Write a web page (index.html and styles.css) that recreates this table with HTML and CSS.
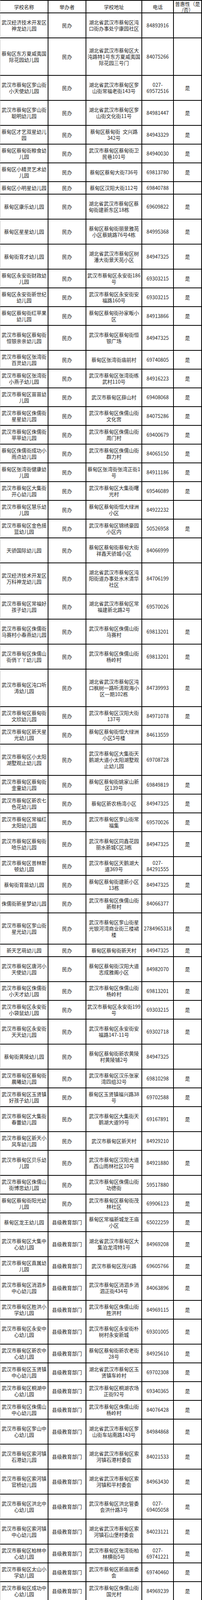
FILE: index.html
```html
<!DOCTYPE html>
<html lang="zh-CN">
<head>
<meta charset="utf-8">
<title>蔡甸区幼儿园名录</title>
<link rel="stylesheet" href="styles.css">
</head>
<body>
<div class="list">
<div class="row head"><div class="cell">学校名称</div><div class="cell">举办者</div><div class="cell">学校地址</div><div class="cell">电话</div><div class="cell">普惠性（是<br>/否）</div></div>
<div class="row h4"><div class="cell">武汉经济技术开发区<br>神龙幼儿园</div><div class="cell">民办</div><div class="cell">湖北省武汉市蔡甸区沌<br>口街办事处宁康园社区</div><div class="cell">84893916</div><div class="cell"></div></div>
<div class="row h6"><div class="cell">蔡甸区东方夏威夷国<br>际花园幼儿园</div><div class="cell">民办</div><div class="cell">湖北省武汉市蔡甸区大<br>沌路特1号东方夏威夷国<br>际花园三号门</div><div class="cell">84075266</div><div class="cell"></div></div>
<div class="row h4"><div class="cell">武汉市蔡甸区奓山街<br>小天使幼儿园</div><div class="cell">民办</div><div class="cell">湖北省武汉市蔡甸区奓<br>山街常福老街143号</div><div class="cell">027-<br>69572516</div><div class="cell">是</div></div>
<div class="row h4"><div class="cell">武汉市蔡甸区奓山街<br>聪明幼儿园</div><div class="cell">民办</div><div class="cell">湖北省武汉市蔡甸区奓<br>山街文化街11号</div><div class="cell">84981447</div><div class="cell">是</div></div>
<div class="row h3"><div class="cell">蔡甸区才艺双星幼儿<br>园</div><div class="cell">民办</div><div class="cell">蔡甸区蔡甸街&ensp;文兴路<br>342号</div><div class="cell">84943329</div><div class="cell">是</div></div>
<div class="row h3"><div class="cell">蔡甸区蔡甸街粮食幼<br>儿园</div><div class="cell">民办</div><div class="cell">武汉市蔡甸区蔡甸街卫<br>民巷101号</div><div class="cell">84940030</div><div class="cell">是</div></div>
<div class="row h3"><div class="cell">蔡甸区小精灵艺术幼<br>儿园</div><div class="cell">民办</div><div class="cell">蔡甸区蔡甸大街736号</div><div class="cell">69813780</div><div class="cell">是</div></div>
<div class="row h2"><div class="cell">蔡甸区小明星幼儿园</div><div class="cell">民办</div><div class="cell">蔡甸区汉阳大街112号</div><div class="cell">69840788</div><div class="cell"></div></div>
<div class="row h4"><div class="cell">蔡甸区康乐幼儿园</div><div class="cell">民办</div><div class="cell left">湖北省武汉市蔡甸区蔡<br>甸街建新东区18栋</div><div class="cell">69609822</div><div class="cell">是</div></div>
<div class="row h4"><div class="cell">蔡甸区星星幼儿园</div><div class="cell">民办</div><div class="cell">蔡甸区蔡甸街丽景雅苑<br>小区蔡姚路76号4栋</div><div class="cell">84995368</div><div class="cell">是</div></div>
<div class="row h4"><div class="cell">蔡甸街育才幼儿园</div><div class="cell">民办</div><div class="cell">湖北省武汉市蔡甸区树<br>潘大街景天苑小区</div><div class="cell">84947325</div><div class="cell">是</div></div>
<div class="row h3"><div class="cell">蔡甸区永安街财政幼<br>儿园</div><div class="cell">民办</div><div class="cell">武汉市蔡甸区永安街186<br>号</div><div class="cell">69303215</div><div class="cell">是</div></div>
<div class="row h3"><div class="cell">蔡甸区永安街新世纪<br>幼儿园</div><div class="cell">民办</div><div class="cell">武汉市蔡甸区永安街安<br>福路160号</div><div class="cell">69303215</div><div class="cell">是</div></div>
<div class="row h3"><div class="cell">蔡甸区蔡甸街红苹果<br>幼儿园</div><div class="cell">民办</div><div class="cell">蔡甸区蔡甸街孙家畈小<br>区</div><div class="cell">84913866</div><div class="cell">是</div></div>
<div class="row h4"><div class="cell">武汉市蔡甸区蔡甸街<br>恒银亲亲幼儿园</div><div class="cell">民办</div><div class="cell">武汉市蔡甸区蔡甸街恒<br>银广场</div><div class="cell">84947325</div><div class="cell">是</div></div>
<div class="row h3"><div class="cell">武汉市蔡甸区张湾街<br>百灵幼儿园</div><div class="cell">民办</div><div class="cell">蔡甸区张湾街庙前村</div><div class="cell">69740805</div><div class="cell">是</div></div>
<div class="row h3"><div class="cell">武汉市蔡甸区张湾街<br>小燕子幼儿园</div><div class="cell">民办</div><div class="cell">武汉市蔡甸区张湾街练<br>武村110号</div><div class="cell">84916223</div><div class="cell">是</div></div>
<div class="row h3"><div class="cell">武汉市蔡甸区苗苗幼<br>儿园</div><div class="cell">民办</div><div class="cell">武汉市蔡甸区薛山村</div><div class="cell">69408068</div><div class="cell">是</div></div>
<div class="row h3"><div class="cell">武汉市蔡甸区侏儒街<br>星星幼儿园</div><div class="cell">民办</div><div class="cell">武汉市蔡甸区侏儒山街<br>文化宫</div><div class="cell">84075286</div><div class="cell">是</div></div>
<div class="row h3"><div class="cell">武汉市蔡甸区侏儒街<br>苹苹幼儿园</div><div class="cell">民办</div><div class="cell">武汉市蔡甸区侏儒山街<br>周门村</div><div class="cell">69400679</div><div class="cell">是</div></div>
<div class="row h3"><div class="cell">蔡甸区侏儒街成功小<br>雨点幼儿园</div><div class="cell">民办</div><div class="cell">武汉市蔡甸区侏儒山街<br>群力村</div><div class="cell">84065150</div><div class="cell">是</div></div>
<div class="row h3"><div class="cell">蔡甸区张湾街健康幼<br>儿园</div><div class="cell">民办</div><div class="cell">蔡甸区张湾街张湾正街1<br>号</div><div class="cell">84911186</div><div class="cell">是</div></div>
<div class="row h3"><div class="cell">武汉市蔡甸区大集街<br>开心幼儿园</div><div class="cell">民办</div><div class="cell">武汉市蔡甸区大集街曙<br>光村</div><div class="cell">69546089</div><div class="cell">是</div></div>
<div class="row h3"><div class="cell">武汉市蔡甸区慧乐幼<br>儿园</div><div class="cell">民办</div><div class="cell">蔡甸区蔡甸街恒大绿洲<br>小区</div><div class="cell">84922232</div><div class="cell"></div></div>
<div class="row h3"><div class="cell">武汉市蔡甸区金色摇<br>篮幼儿园</div><div class="cell">民办</div><div class="cell">武汉市蔡甸区锦绣豪园<br>小区内</div><div class="cell">50526958</div><div class="cell">是</div></div>
<div class="row h4"><div class="cell">天骄国际幼儿园</div><div class="cell">民办</div><div class="cell">蔡甸区蔡甸街蔡甸大街<br>祥鑫天骄城小区</div><div class="cell">84066999</div><div class="cell"></div></div>
<div class="row h5"><div class="cell">武汉经济技术开发区<br>万科神龙幼儿园</div><div class="cell">民办</div><div class="cell">湖北省武汉市蔡甸区沌<br>阳街道办事处水木清华<br>社区</div><div class="cell">84706199</div><div class="cell"></div></div>
<div class="row h4"><div class="cell">武汉市蔡甸区常福好<br>孩子幼儿园</div><div class="cell">民办</div><div class="cell">湖北省武汉市蔡甸区常<br>福建新北路2号</div><div class="cell">69570026</div><div class="cell"></div></div>
<div class="row h4"><div class="cell">武汉市蔡甸区侏儒街<br>马赛村小春燕幼儿园</div><div class="cell">民办</div><div class="cell">武汉市蔡甸区侏儒山街<br>马赛村</div><div class="cell">69813201</div><div class="cell">是</div></div>
<div class="row h4"><div class="cell">武汉市蔡甸区侏儒山<br>街俏丫丫幼儿园</div><div class="cell">民办</div><div class="cell">武汉市蔡甸区侏儒山街<br>杨岭村</div><div class="cell">69813201</div><div class="cell">是</div></div>
<div class="row h6"><div class="cell">武汉市蔡甸区沌口听<br>涛幼儿园</div><div class="cell">民办</div><div class="cell">湖北省武汉市蔡甸区沌<br>口枫树一路听涛观海小<br>区一期102栋</div><div class="cell">84739993</div><div class="cell">是</div></div>
<div class="row h3"><div class="cell">武汉市蔡甸区蔡甸街<br>文欣幼儿园</div><div class="cell">民办</div><div class="cell">武汉市蔡甸区汉阳大街<br>137号</div><div class="cell">84971078</div><div class="cell">是</div></div>
<div class="row h3"><div class="cell">武汉市蔡甸区新天星<br>光幼儿园</div><div class="cell">民办</div><div class="cell">蔡甸区蔡甸街恒大绿洲<br>小区5号楼</div><div class="cell">84613559</div><div class="cell"></div></div>
<div class="row h5"><div class="cell">武汉市蔡甸区小太阳<br>湖墅观止幼儿园</div><div class="cell">民办</div><div class="cell">武汉市蔡甸区大集街天<br>鹅湖大道小太阳湖墅观<br>止幼儿园</div><div class="cell">69708728</div><div class="cell"></div></div>
<div class="row h3"><div class="cell">武汉市蔡甸区蔡甸街<br>金童幼儿园</div><div class="cell">民办</div><div class="cell">蔡甸区蔡甸街姚家山新<br>区139号</div><div class="cell">69849819</div><div class="cell">是</div></div>
<div class="row h3"><div class="cell">武汉市蔡甸区新农七<br>色花幼儿园</div><div class="cell">民办</div><div class="cell">蔡甸区新农杨湾小区</div><div class="cell">84947325</div><div class="cell">是</div></div>
<div class="row h3"><div class="cell">武汉市蔡甸区常福红<br>太阳幼儿园</div><div class="cell">民办</div><div class="cell">武汉市蔡甸区奓山街常<br>福集</div><div class="cell">69570026</div><div class="cell">是</div></div>
<div class="row h4"><div class="cell">武汉市蔡甸区蔡甸街<br>哈乐幼儿园</div><div class="cell">民办</div><div class="cell">武汉市蔡甸区同鑫花园<br>丽水新城C区3栋</div><div class="cell">84947325</div><div class="cell">是</div></div>
<div class="row h3"><div class="cell">武汉市蔡甸区普林斯<br>顿幼儿园</div><div class="cell">民办</div><div class="cell">武汉市蔡甸区天鹅湖大<br>道369号</div><div class="cell">027-<br>84291555</div><div class="cell"></div></div>
<div class="row h3"><div class="cell">蔡甸街育苗幼儿园</div><div class="cell">民办</div><div class="cell">蔡甸区蔡甸街建新小区<br>13栋</div><div class="cell">84947325</div><div class="cell">是</div></div>
<div class="row h3"><div class="cell">侏儒街新星梦幼儿园</div><div class="cell">民办</div><div class="cell">武汉市蔡甸区侏儒山街<br>新帮村</div><div class="cell">84066377</div><div class="cell"></div></div>
<div class="row h5"><div class="cell">武汉市蔡甸区奓山街<br>星光幼儿园</div><div class="cell">民办</div><div class="cell">武汉市蔡甸区奓山街星<br>光银河湾商业街三楼裙<br>楼</div><div class="cell">2784965318</div><div class="cell">是</div></div>
<div class="row h2"><div class="cell">新天艺萌幼儿园</div><div class="cell">民办</div><div class="cell">蔡甸区蔡甸街新天村</div><div class="cell">84947325</div><div class="cell">是</div></div>
<div class="row h4"><div class="cell">武汉市蔡甸区唐河小<br>天使幼儿园</div><div class="cell">民办</div><div class="cell">蔡甸区蔡甸街汉阳大道<br>志成雅阁小区</div><div class="cell">84982070</div><div class="cell">是</div></div>
<div class="row h3"><div class="cell">武汉市蔡甸区侏儒街<br>小天才幼儿园</div><div class="cell">民办</div><div class="cell">武汉市蔡甸区侏儒山街<br>杨岭村</div><div class="cell">69813201</div><div class="cell">是</div></div>
<div class="row h3"><div class="cell">武汉市蔡甸区永安街<br>小袋鼠幼儿园</div><div class="cell">民办</div><div class="cell">武汉市蔡甸区永安街199<br>号</div><div class="cell">69303215</div><div class="cell">是</div></div>
<div class="row h4"><div class="cell">武汉市蔡甸区永安街<br>天天幼儿园</div><div class="cell">民办</div><div class="cell">武汉市蔡甸区永安街安<br>福路147-11号</div><div class="cell">69302718</div><div class="cell">是</div></div>
<div class="row h4"><div class="cell">蔡甸街黄陵幼儿园</div><div class="cell">民办</div><div class="cell">蔡甸区蔡甸街新农黄陵<br>村黄陵铺2号</div><div class="cell">84947325</div><div class="cell"></div></div>
<div class="row h3"><div class="cell">武汉市蔡甸区蔡甸街<br>晨曦幼儿园</div><div class="cell">民办</div><div class="cell">武汉市蔡甸区汉乐张家<br>湾四组32号</div><div class="cell">69810298</div><div class="cell">是</div></div>
<div class="row h3"><div class="cell">武汉市蔡甸区玉贤镇<br>好孩子幼儿园</div><div class="cell">民办</div><div class="cell">蔡甸区玉贤镇福兴路38<br>号</div><div class="cell">69702588</div><div class="cell">是</div></div>
<div class="row h4"><div class="cell">武汉市蔡甸区大集街<br>春蕾幼儿园</div><div class="cell">民办</div><div class="cell">武汉市蔡甸区大集街天<br>鹅湖大道99号</div><div class="cell">69167891</div><div class="cell">是</div></div>
<div class="row h3"><div class="cell">武汉市蔡甸区新天小<br>风车幼儿园</div><div class="cell">民办</div><div class="cell">武汉市蔡甸区新天村</div><div class="cell">84929210</div><div class="cell"></div></div>
<div class="row h4"><div class="cell">武汉市蔡甸区贝乐幼<br>儿园</div><div class="cell">民办</div><div class="cell">武汉市蔡甸区汉阳大道<br>西山雨林社区10号</div><div class="cell">84921880</div><div class="cell">是</div></div>
<div class="row h3"><div class="cell">武汉市蔡甸区侏儒山<br>街博思幼儿园</div><div class="cell">民办</div><div class="cell">武汉市蔡甸区侏儒山街<br>功德街</div><div class="cell">59517880</div><div class="cell"></div></div>
<div class="row h3"><div class="cell">蔡甸区蔡甸街阳光幼<br>儿园</div><div class="cell">民办</div><div class="cell">武汉市蔡甸区蔡甸街茂<br>林社区</div><div class="cell">69906123</div><div class="cell">是</div></div>
<div class="row h3"><div class="cell">蔡甸区龙王幼儿园</div><div class="cell">县级教育部门</div><div class="cell">蔡甸区常福新城龙王庙<br>小区</div><div class="cell">65022259</div><div class="cell">是</div></div>
<div class="row h4"><div class="cell">武汉市蔡甸区大集中<br>心幼儿园</div><div class="cell">县级教育部门</div><div class="cell">湖北省武汉市蔡甸区大<br>集泊龙湾特1号</div><div class="cell">84969208</div><div class="cell">是</div></div>
<div class="row h3"><div class="cell">武汉市蔡甸区直属幼<br>儿园</div><div class="cell">县级教育部门</div><div class="cell">武汉市蔡甸区茂兴路</div><div class="cell">69605766</div><div class="cell">是</div></div>
<div class="row h4"><div class="cell">武汉市蔡甸区消泗乡<br>中心幼儿园</div><div class="cell">县级教育部门</div><div class="cell">武汉市蔡甸区消泗乡消<br>泗正街434号</div><div class="cell">84063896</div><div class="cell">是</div></div>
<div class="row h3"><div class="cell">武汉市蔡甸区胜洪小<br>学幼儿园</div><div class="cell">县级教育部门</div><div class="cell">武汉市蔡甸区侏儒山街<br>胜洪村</div><div class="cell">84969115</div><div class="cell">是</div></div>
<div class="row h4"><div class="cell">武汉市蔡甸区永安中<br>心幼儿园</div><div class="cell">县级教育部门</div><div class="cell">武汉市蔡甸区永安街朴<br>树村永安新城</div><div class="cell">69301005</div><div class="cell">是</div></div>
<div class="row h3"><div class="cell">武汉市蔡甸区新农中<br>心幼儿园</div><div class="cell">县级教育部门</div><div class="cell">蔡甸区蔡甸街新农老街<br>28号</div><div class="cell">84925610</div><div class="cell">是</div></div>
<div class="row h3"><div class="cell">武汉市蔡甸区玉贤镇<br>中心幼儿园</div><div class="cell">县级教育部门</div><div class="cell">湖北省武汉市蔡甸区玉<br>贤镇车岭村</div><div class="cell">69702308</div><div class="cell">是</div></div>
<div class="row h3"><div class="cell">武汉市蔡甸区桐湖中<br>心幼儿园</div><div class="cell">县级教育部门</div><div class="cell">武汉市蔡甸区桐湖农场<br>正街92号</div><div class="cell">69340365</div><div class="cell">是</div></div>
<div class="row h3"><div class="cell">武汉市蔡甸区侏儒山<br>中心幼儿园</div><div class="cell">县级教育部门</div><div class="cell">武汉市蔡甸区侏儒山街<br>杨岭村</div><div class="cell">84076428</div><div class="cell">是</div></div>
<div class="row h4"><div class="cell">武汉市蔡甸区奓山中<br>心幼儿园</div><div class="cell">县级教育部门</div><div class="cell">湖北省武汉市蔡甸区奓<br>山街车站南路143号</div><div class="cell">84984868</div><div class="cell">是</div></div>
<div class="row h4"><div class="cell">武汉市蔡甸区索河镇<br>石港幼儿园</div><div class="cell">县级教育部门</div><div class="cell">湖北省武汉市蔡甸区索<br>河镇石港村委会</div><div class="cell">84021533</div><div class="cell">是</div></div>
<div class="row h4"><div class="cell">武汉市蔡甸区索河镇<br>官桥幼儿园</div><div class="cell">县级教育部门</div><div class="cell">湖北省武汉市蔡甸区索<br>河镇和平村委会</div><div class="cell">84963430</div><div class="cell">是</div></div>
<div class="row h4"><div class="cell">武汉市蔡甸区洪北中<br>心幼儿园</div><div class="cell">县级教育部门</div><div class="cell">武汉市蔡甸区洪北管委<br>会洪什路3号</div><div class="cell">027-<br>69405058</div><div class="cell">是</div></div>
<div class="row h4"><div class="cell">武汉市蔡甸区索河镇<br>中心幼儿园</div><div class="cell">县级教育部门</div><div class="cell">湖北省武汉市蔡甸区索<br>河镇石山堡村委会</div><div class="cell">84023121</div><div class="cell">是</div></div>
<div class="row h3"><div class="cell">武汉市蔡甸区柏林中<br>心幼儿园</div><div class="cell">县级教育部门</div><div class="cell">武汉市蔡甸区张湾街柏<br>林横街5号</div><div class="cell">027-<br>69741221</div><div class="cell">是</div></div>
<div class="row h3"><div class="cell">武汉市蔡甸区太山小<br>学幼儿园</div><div class="cell">县级教育部门</div><div class="cell">武汉市蔡甸区新庙居委<br>会</div><div class="cell">69740460</div><div class="cell">是</div></div>
<div class="row h3"><div class="cell">武汉市蔡甸区成功中<br>心幼儿园</div><div class="cell">县级教育部门</div><div class="cell">武汉市蔡甸区侏儒山街<br>国光村</div><div class="cell">84969239</div><div class="cell">是</div></div>
<div class="row h3"><div class="cell">武汉市蔡甸区姚家林<br>幼儿园</div><div class="cell">县级教育部门</div><div class="cell">蔡甸区蔡甸街姚集1号</div><div class="cell">69816127</div><div class="cell">是</div></div>
<div class="row h3"><div class="cell">武汉市蔡甸区知音幼<br>儿园</div><div class="cell">县级教育部门</div><div class="cell">武汉市蔡甸区汉阳大街<br>307号</div><div class="cell">84922218</div><div class="cell">是</div></div>
<div class="row h3"><div class="cell">武汉市蔡甸区城关中<br>心幼儿园</div><div class="cell">县级教育部门</div><div class="cell">武汉市蔡甸区蔡甸街</div><div class="cell">69606777</div><div class="cell">是</div></div>
</div>
</body>
</html>
```

FILE: styles.css
```css
html, body {
  margin: 0;
  padding: 0;
  background: #ffffff;
}

.list {
  width: 517px;
  font-family: "Noto Sans CJK SC", "Noto Sans", sans-serif;
  font-size: 12.8px;
  line-height: 16px;
  color: #1e1e1e;
}

.row {
  display: grid;
  grid-template-columns: 124px 97px 143px 81px 72px;
  box-sizing: border-box;
}

.cell {
  box-sizing: border-box;
  display: flex;
  align-items: center;
  justify-content: center;
  text-align: center;
  white-space: nowrap;
  min-width: 0;
  border-right: 2px solid #000000;
  border-bottom: 2px solid #000000;
}

.cell:first-child {
  border-left: 1px solid #c4c4c4;
}

.head {
  height: 34px;
  line-height: 15px;
}

.head .cell {
  border-top: 2px solid #000000;
}

.h2 { height: 32px; }
.h3 { height: 48px; }
.h4 { height: 64px; }
.h5 { height: 80px; }
.h6 { height: 96px; }

.cell.left {
  justify-content: flex-start;
  text-align: left;
  padding-left: 6px;
}
```
